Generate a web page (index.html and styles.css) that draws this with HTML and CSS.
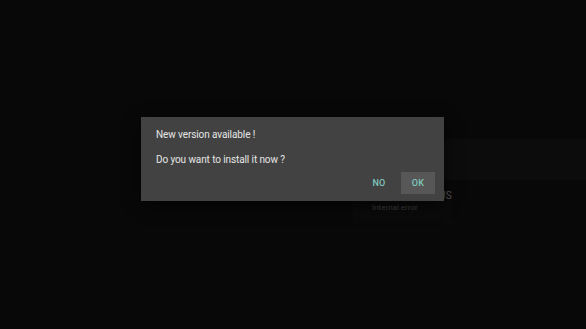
FILE: index.html
```html
<!DOCTYPE html>
<html>
<head>
<meta charset="utf-8">
<link rel="stylesheet" href="styles.css">
</head>
<body>
<div class="screen">
  <div class="app">
    <div class="band"></div>
    <div class="card">
      <div class="card-title">STATUS</div>
      <div class="card-sub">Internal error</div>
    </div>
  </div>
  <div class="dialog">
    <p class="msg">New version available !</p>
    <p class="msg second">Do you want to install it now ?</p>
    <div class="actions">
      <button class="btn">NO</button>
      <button class="btn focused">OK</button>
    </div>
  </div>
</div>
</body>
</html>
```
FILE: styles.css
```css
html, body {
  margin: 0;
  padding: 0;
  background: #080808;
}
.screen {
  position: relative;
  width: 586px;
  height: 329px;
  overflow: hidden;
  background: #080808;
  font-family: Roboto, "Noto Sans", sans-serif;
}
.app {
  display: flex;
  flex-direction: column;
  padding: 139px 0 0 353px;
}
.band {
  height: 41px;
  background: #0c0c0c;
}
.card {
  width: 99px;
  margin-top: 10px;
  padding-bottom: 10px;
  background: #0a0a0a;
}
.card-title {
  text-align: right;
  font-size: 10px;
  line-height: 12px;
  color: #555;
  letter-spacing: 0.3px;
}
.card-sub {
  font-size: 8px;
  line-height: 10px;
  color: #3a3a3a;
  padding-left: 19px;
  margin-top: 1px;
}
.dialog {
  position: absolute;
  left: 141px;
  top: 117px;
  width: 303px;
  height: 84px;
  box-sizing: border-box;
  padding: 12px 9px 7px 15px;
  background: #424242;
  box-shadow: 0 3px 14px rgba(0, 0, 0, 0.6);
  display: flex;
  flex-direction: column;
}
.msg {
  margin: 0;
  font-size: 10px;
  line-height: 12px;
  letter-spacing: -0.1px;
  color: #e6e6e6;
}
.msg.second {
  margin-top: 13px;
}
.actions {
  margin-top: 6px;
  display: flex;
  justify-content: flex-end;
  gap: 5px;
}
.btn {
  width: 34px;
  height: 22px;
  padding: 0;
  border: none;
  background: transparent;
  color: #7fc7bd;
  font-family: Roboto, "Noto Sans", sans-serif;
  font-weight: 500;
  font-size: 9px;
  letter-spacing: 0.2px;
}
.btn.focused {
  background: #575757;
}
```
